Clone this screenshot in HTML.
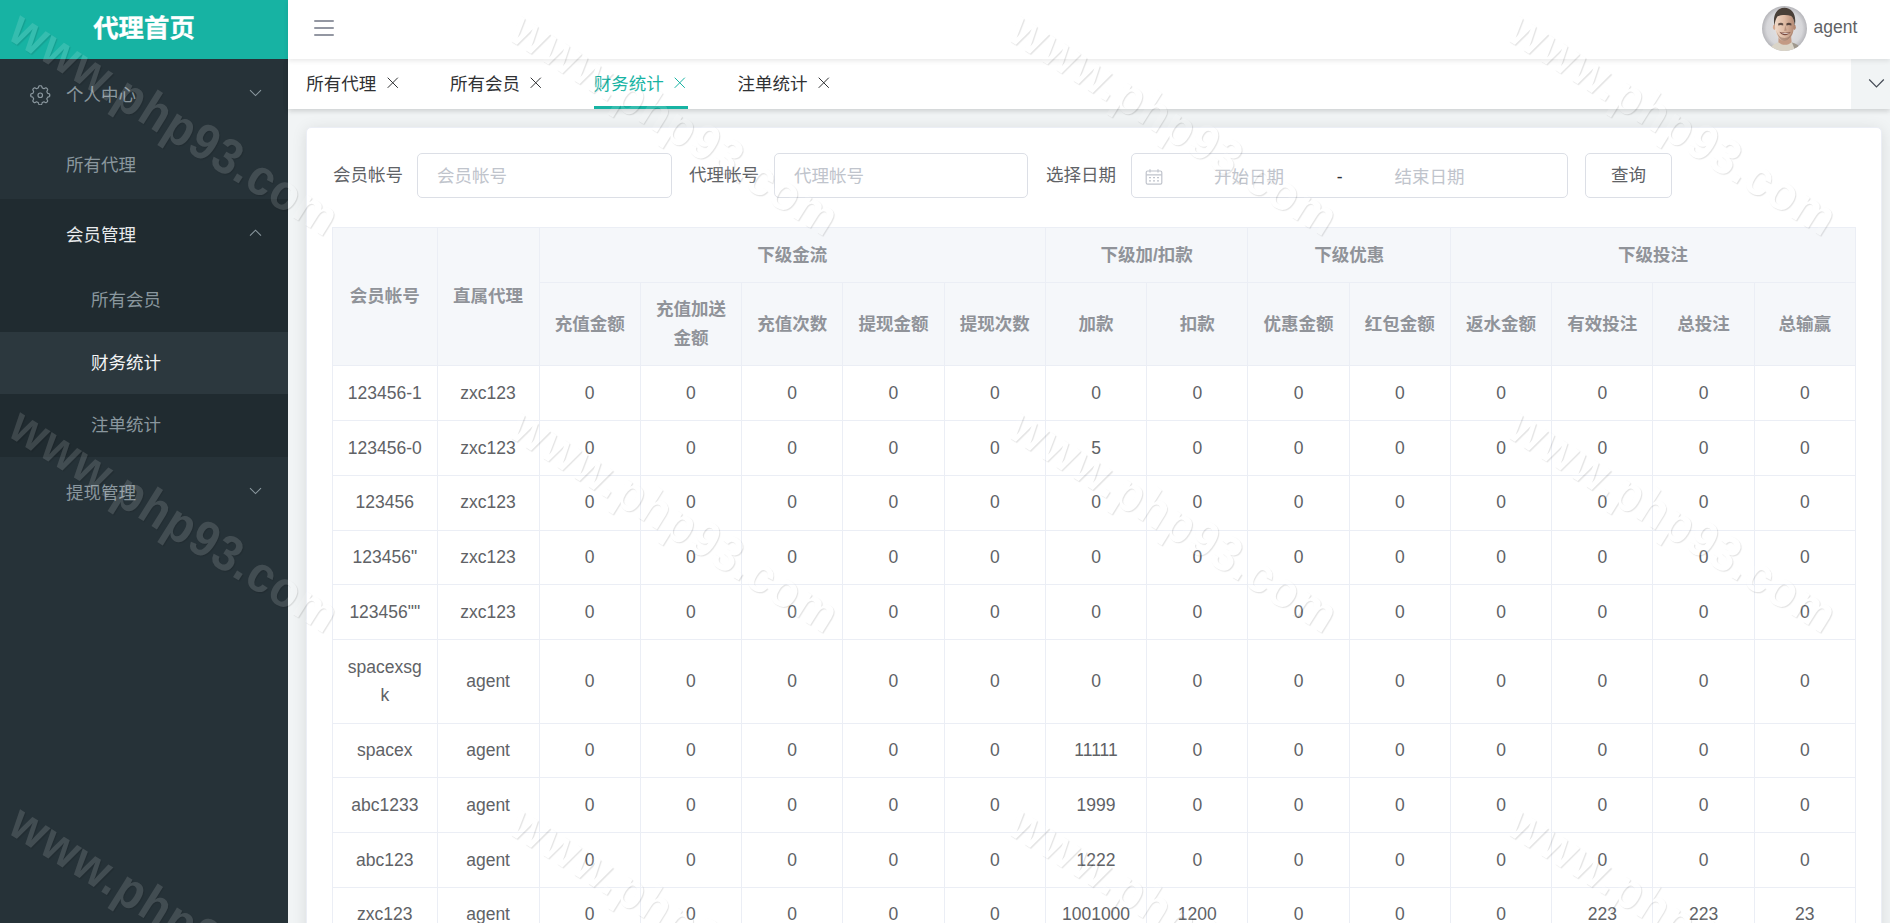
<!DOCTYPE html>
<html lang="zh-CN">
<head>
<meta charset="utf-8">
<title>代理首页</title>
<style>
*,*:before,*:after{box-sizing:border-box}
html,body{margin:0;padding:0}
body{width:1890px;height:923px;overflow:hidden;position:relative;background:#f1f4f5;
  font-family:"Liberation Sans","Noto Sans CJK SC",sans-serif;font-size:17.5px;color:#606266;}
/* ---------- sidebar ---------- */
.sidebar{position:absolute;left:0;top:0;width:288px;height:923px;background:#263238;overflow:hidden}
.brand{position:absolute;left:0;top:0;width:288px;height:59px;background:#17b3a3;color:#fff;
  font-size:25.4px;font-weight:bold;text-align:center;line-height:56px;-webkit-text-stroke:.3px #fff}
.menu{position:absolute;left:0;top:59px;width:288px}
.mi{position:relative;height:70px;line-height:72.4px;color:#8a979e;font-size:17.5px;padding-left:66px;white-space:nowrap}
.mi.on{color:#e8eaec}
.mi svg.gear{position:absolute;left:30.2px;top:25.5px;width:20.5px;height:20.5px}
.mi svg.arr{position:absolute;left:248px;top:28px;width:15px;height:12px}
.sub{background:#202b30}
.sub .mi{height:62.5px;line-height:63.5px;padding-left:91px}
.sub .mi.act{background:#2c383e;color:#f4f5f6}
/* ---------- navbar ---------- */
.navbar{position:absolute;left:288px;top:0;width:1602px;height:59px;background:#fff;z-index:5;
  box-shadow:0 2px 5px rgba(0,0,0,.09)}
.burger{position:absolute;left:26.4px;top:20.2px;width:19.6px;height:16px}
.burger i{position:absolute;left:0;width:100%;height:1.7px;background:#9397a2;border-radius:1px}
.avatar{position:absolute;left:1474px;top:6px;width:45px;height:45px;border-radius:50%;overflow:hidden}
.uname{position:absolute;left:1525.5px;top:0;line-height:55px;font-size:17.5px;color:#606266}
/* ---------- tabs ---------- */
.tabs{position:absolute;left:288px;top:59px;width:1602px;height:50px;background:#fff;z-index:4;
  box-shadow:0 2.5px 5px 0 rgba(0,0,0,.12),0 0 7.5px 0 rgba(0,0,0,.04);padding-left:18.3px;white-space:nowrap;font-size:0}
.tab{display:inline-block;position:relative;height:50px;line-height:50px;font-size:17.5px;color:#303133;padding:0 25px;vertical-align:top}
.tab:first-child{padding-left:0}
.tab svg{display:inline-block;width:17.5px;height:17.5px;margin-left:7.3px;margin-right:-1.05px;vertical-align:-1.6px}
.tab.on{color:#17b3a3}
.tab.on:after{content:"";position:absolute;left:25px;right:25px;bottom:0.5px;height:2.5px;background:#17b3a3}
.tools{position:absolute;right:0;top:0;width:39px;height:50px;background:#f1f4f5}
.tools svg{position:absolute;left:16.5px;top:19px;width:17px;height:11px}
/* ---------- card ---------- */
.card{position:absolute;left:306px;top:127px;width:1576px;height:900px;background:#fff;border:1px solid #ebeef5;border-radius:5px;
  box-shadow:0 2.5px 15px 0 rgba(0,0,0,.1)}
.content{position:absolute;left:0;top:0;width:1890px;height:923px;overflow:hidden}
.lab{position:absolute;top:153px;height:45px;line-height:44px;font-size:17.5px;color:#606266;white-space:nowrap}
.inp{position:absolute;top:153px;height:45px;border:1px solid #dcdfe6;border-radius:5px;background:#fff;
  font-size:17.5px;color:#c0c4cc;line-height:45px;padding-left:19px;white-space:nowrap}
.btn{position:absolute;top:153px;height:45px;border:1px solid #dcdfe6;border-radius:5px;background:#fff;
  font-size:17.5px;color:#606266;line-height:42.5px;text-align:center}
.rng span{position:absolute;top:0;text-align:center;line-height:46px}
/* ---------- table ---------- */
table{position:absolute;left:332px;top:227px;border-collapse:separate;border-spacing:0;table-layout:fixed;width:1523.85px;
  border-top:1px solid #ebeef5;border-left:1px solid #ebeef5;font-size:17.5px}
th,td{border-right:1px solid #ebeef5;border-bottom:1px solid #ebeef5;padding:12.5px 0;text-align:center;vertical-align:middle}
th{background:#f5f7fa;color:#909399;font-weight:bold}
td{color:#606266;background:#fff}
.cell{padding:0 12.5px;line-height:28.75px;word-break:break-all;overflow:hidden}
/* ---------- watermark ---------- */
.wm{position:absolute;z-index:50;font-family:"Liberation Sans",sans-serif;font-weight:bold;font-style:normal;font-size:46px;
  letter-spacing:1.2px;line-height:1;color:#fff;opacity:.13;text-shadow:1.4px .4px 1px rgba(0,0,0,.85);
  transform-origin:0 0;transform:rotate(32deg) translateY(-1.5px) scaleY(1.1);white-space:nowrap;pointer-events:none}
</style>
</head>
<body>

<div class="sidebar">
  <div class="brand">代理首页</div>
  <div class="menu">
    <div class="mi"><svg class="gear" viewBox="0 0 20 20"><path d="M19.30 10.00 L19.30 10.15 L19.29 10.29 L19.28 10.44 L19.26 10.58 L19.24 10.73 L19.20 10.87 L19.15 11.01 L19.08 11.15 L18.96 11.28 L18.80 11.39 L18.57 11.50 L18.29 11.58 L17.99 11.65 L17.71 11.72 L17.48 11.80 L17.31 11.88 L17.19 11.97 L17.10 12.06 L17.03 12.16 L16.97 12.27 L16.92 12.37 L16.88 12.48 L16.83 12.58 L16.79 12.69 L16.74 12.79 L16.70 12.90 L16.66 13.01 L16.61 13.11 L16.57 13.22 L16.53 13.33 L16.50 13.44 L16.48 13.56 L16.47 13.69 L16.50 13.84 L16.56 14.02 L16.67 14.23 L16.82 14.48 L16.98 14.74 L17.12 15.00 L17.21 15.23 L17.24 15.43 L17.23 15.61 L17.19 15.76 L17.12 15.89 L17.05 16.02 L16.96 16.14 L16.87 16.25 L16.78 16.36 L16.68 16.47 L16.58 16.58 L16.47 16.68 L16.36 16.78 L16.25 16.87 L16.14 16.96 L16.02 17.05 L15.89 17.12 L15.76 17.19 L15.61 17.23 L15.43 17.24 L15.23 17.21 L15.00 17.12 L14.74 16.98 L14.48 16.82 L14.23 16.67 L14.02 16.56 L13.84 16.50 L13.69 16.47 L13.56 16.48 L13.44 16.50 L13.33 16.53 L13.22 16.57 L13.11 16.61 L13.01 16.66 L12.90 16.70 L12.79 16.74 L12.69 16.79 L12.58 16.83 L12.48 16.88 L12.37 16.92 L12.27 16.97 L12.16 17.03 L12.06 17.10 L11.97 17.19 L11.88 17.31 L11.80 17.48 L11.72 17.71 L11.65 17.99 L11.58 18.29 L11.50 18.57 L11.39 18.80 L11.28 18.96 L11.15 19.08 L11.01 19.15 L10.87 19.20 L10.73 19.24 L10.58 19.26 L10.44 19.28 L10.29 19.29 L10.15 19.30 L10.00 19.30 L9.85 19.30 L9.71 19.29 L9.56 19.28 L9.42 19.26 L9.27 19.24 L9.13 19.20 L8.99 19.15 L8.85 19.08 L8.72 18.96 L8.61 18.80 L8.50 18.57 L8.42 18.29 L8.35 17.99 L8.28 17.71 L8.20 17.48 L8.12 17.31 L8.03 17.19 L7.94 17.10 L7.84 17.03 L7.73 16.97 L7.63 16.92 L7.52 16.88 L7.42 16.83 L7.31 16.79 L7.21 16.74 L7.10 16.70 L6.99 16.66 L6.89 16.61 L6.78 16.57 L6.67 16.53 L6.56 16.50 L6.44 16.48 L6.31 16.47 L6.16 16.50 L5.98 16.56 L5.77 16.67 L5.52 16.82 L5.26 16.98 L5.00 17.12 L4.77 17.21 L4.57 17.24 L4.39 17.23 L4.24 17.19 L4.11 17.12 L3.98 17.05 L3.86 16.96 L3.75 16.87 L3.64 16.78 L3.53 16.68 L3.42 16.58 L3.32 16.47 L3.22 16.36 L3.13 16.25 L3.04 16.14 L2.95 16.02 L2.88 15.89 L2.81 15.76 L2.77 15.61 L2.76 15.43 L2.79 15.23 L2.88 15.00 L3.02 14.74 L3.18 14.48 L3.33 14.23 L3.44 14.02 L3.50 13.84 L3.53 13.69 L3.52 13.56 L3.50 13.44 L3.47 13.33 L3.43 13.22 L3.39 13.11 L3.34 13.01 L3.30 12.90 L3.26 12.79 L3.21 12.69 L3.17 12.58 L3.12 12.48 L3.08 12.37 L3.03 12.27 L2.97 12.16 L2.90 12.06 L2.81 11.97 L2.69 11.88 L2.52 11.80 L2.29 11.72 L2.01 11.65 L1.71 11.58 L1.43 11.50 L1.20 11.39 L1.04 11.28 L0.92 11.15 L0.85 11.01 L0.80 10.87 L0.76 10.73 L0.74 10.58 L0.72 10.44 L0.71 10.29 L0.70 10.15 L0.70 10.00 L0.70 9.85 L0.71 9.71 L0.72 9.56 L0.74 9.42 L0.76 9.27 L0.80 9.13 L0.85 8.99 L0.92 8.85 L1.04 8.72 L1.20 8.61 L1.43 8.50 L1.71 8.42 L2.01 8.35 L2.29 8.28 L2.52 8.20 L2.69 8.12 L2.81 8.03 L2.90 7.94 L2.97 7.84 L3.03 7.73 L3.08 7.63 L3.12 7.52 L3.17 7.42 L3.21 7.31 L3.26 7.21 L3.30 7.10 L3.34 6.99 L3.39 6.89 L3.43 6.78 L3.47 6.67 L3.50 6.56 L3.52 6.44 L3.53 6.31 L3.50 6.16 L3.44 5.98 L3.33 5.77 L3.18 5.52 L3.02 5.26 L2.88 5.00 L2.79 4.77 L2.76 4.57 L2.77 4.39 L2.81 4.24 L2.88 4.11 L2.95 3.98 L3.04 3.86 L3.13 3.75 L3.22 3.64 L3.32 3.53 L3.42 3.42 L3.53 3.32 L3.64 3.22 L3.75 3.13 L3.86 3.04 L3.98 2.95 L4.11 2.88 L4.24 2.81 L4.39 2.77 L4.57 2.76 L4.77 2.79 L5.00 2.88 L5.26 3.02 L5.52 3.18 L5.77 3.33 L5.98 3.44 L6.16 3.50 L6.31 3.53 L6.44 3.52 L6.56 3.50 L6.67 3.47 L6.78 3.43 L6.89 3.39 L6.99 3.34 L7.10 3.30 L7.21 3.26 L7.31 3.21 L7.42 3.17 L7.52 3.12 L7.63 3.08 L7.73 3.03 L7.84 2.97 L7.94 2.90 L8.03 2.81 L8.12 2.69 L8.20 2.52 L8.28 2.29 L8.35 2.01 L8.42 1.71 L8.50 1.43 L8.61 1.20 L8.72 1.04 L8.85 0.92 L8.99 0.85 L9.13 0.80 L9.27 0.76 L9.42 0.74 L9.56 0.72 L9.71 0.71 L9.85 0.70 L10.00 0.70 L10.15 0.70 L10.29 0.71 L10.44 0.72 L10.58 0.74 L10.73 0.76 L10.87 0.80 L11.01 0.85 L11.15 0.92 L11.28 1.04 L11.39 1.20 L11.50 1.43 L11.58 1.71 L11.65 2.01 L11.72 2.29 L11.80 2.52 L11.88 2.69 L11.97 2.81 L12.06 2.90 L12.16 2.97 L12.27 3.03 L12.37 3.08 L12.48 3.12 L12.58 3.17 L12.69 3.21 L12.79 3.26 L12.90 3.30 L13.01 3.34 L13.11 3.39 L13.22 3.43 L13.33 3.47 L13.44 3.50 L13.56 3.52 L13.69 3.53 L13.84 3.50 L14.02 3.44 L14.23 3.33 L14.48 3.18 L14.74 3.02 L15.00 2.88 L15.23 2.79 L15.43 2.76 L15.61 2.77 L15.76 2.81 L15.89 2.88 L16.02 2.95 L16.14 3.04 L16.25 3.13 L16.36 3.22 L16.47 3.32 L16.58 3.42 L16.68 3.53 L16.78 3.64 L16.87 3.75 L16.96 3.86 L17.05 3.98 L17.12 4.11 L17.19 4.24 L17.23 4.39 L17.24 4.57 L17.21 4.77 L17.12 5.00 L16.98 5.26 L16.82 5.52 L16.67 5.77 L16.56 5.98 L16.50 6.16 L16.47 6.31 L16.48 6.44 L16.50 6.56 L16.53 6.67 L16.57 6.78 L16.61 6.89 L16.66 6.99 L16.70 7.10 L16.74 7.21 L16.79 7.31 L16.83 7.42 L16.88 7.52 L16.92 7.63 L16.97 7.73 L17.03 7.84 L17.10 7.94 L17.19 8.03 L17.31 8.12 L17.48 8.20 L17.71 8.28 L17.99 8.35 L18.29 8.42 L18.57 8.50 L18.80 8.61 L18.96 8.72 L19.08 8.85 L19.15 8.99 L19.20 9.13 L19.24 9.27 L19.26 9.42 L19.28 9.56 L19.29 9.71 L19.30 9.85Z" fill="none" stroke="#8a979e" stroke-width="1.15" stroke-linejoin="round"/><circle cx="10" cy="10" r="2.2" fill="none" stroke="#8a979e" stroke-width="1.15"/></svg>个人中心<svg class="arr" viewBox="0 0 15 12"><path d="M2 3.2 L7.5 8.6 L13 3.2" fill="none" stroke="#8a979e" stroke-width="1.1"/></svg></div>
    <div class="mi">所有代理</div>
    <div class="mi on" style="background:#202b30">会员管理<svg class="arr" viewBox="0 0 15 12"><path d="M2 8.6 L7.5 3.2 L13 8.6" fill="none" stroke="#8a979e" stroke-width="1.1"/></svg></div>
    <div class="sub">
      <div class="mi">所有会员</div>
      <div class="mi act">财务统计</div>
      <div class="mi">注单统计</div>
    </div>
    <div class="mi">提现管理<svg class="arr" viewBox="0 0 15 12"><path d="M2 3.2 L7.5 8.6 L13 3.2" fill="none" stroke="#8a979e" stroke-width="1.1"/></svg></div>
  </div>
</div>

<div class="navbar">
  <div class="burger"><i style="top:0"></i><i style="top:7px"></i><i style="top:14px"></i></div>
  <div class="avatar">
    <svg viewBox="0 0 45 45" width="45" height="45">
      <defs>
        <radialGradient id="abg" cx="50%" cy="50%" r="55%"><stop offset="0" stop-color="#e7e7e9"/><stop offset=".72" stop-color="#d6d6d9"/><stop offset="1" stop-color="#a6a6ab"/></radialGradient>
        <linearGradient id="skin" x1="0" x2="1" y1="0" y2="0"><stop offset="0" stop-color="#f0d9c8"/><stop offset=".5" stop-color="#dfbba4"/><stop offset="1" stop-color="#b48a74"/></linearGradient>
        <filter id="abl" x="-10%" y="-10%" width="120%" height="120%"><feGaussianBlur stdDeviation=".45"/></filter>
      </defs>
      <rect width="45" height="45" fill="url(#abg)"/>
      <g filter="url(#abl)">
        <path d="M7 45.5 C8 40 13 37.3 17 36 L29 36 C33 37.2 38 39.4 39.5 45.5 Z" fill="#dad4c7"/>
        <path d="M30 36.4 C34 37.4 38 39.2 39.5 45.5 L33.5 45.5 Z" fill="#8b8479" opacity=".75"/>
        <path d="M16.6 29 L29 29 L29.6 36.2 C26 39.6 20 39.6 16.4 36.2 Z" fill="#c39a84"/>
        <ellipse cx="12.4" cy="21.2" rx="1.5" ry="2.7" fill="#d4a991"/>
        <ellipse cx="32.3" cy="21.2" rx="1.5" ry="2.7" fill="#b18670"/>
        <path d="M13 17 C13 9.5 17 7.5 22.5 7.5 C28 7.5 32 9.5 32 17 C32 24 31 28 28.6 31.4 C26.6 34.2 24.5 34.9 22.5 34.9 C20.5 34.9 18.4 34.2 16.4 31.4 C14 28 13 24 13 17 Z" fill="url(#skin)"/>
        <path d="M14.4 24.5 C15.4 30.8 19 34.9 22.5 34.9 C26 34.9 29.8 30.8 30.8 24.5 C29.6 29.3 26.6 32 22.5 32 C18.4 32 15.8 29.3 14.4 24.5 Z" fill="#86685a" opacity=".5"/>
        <path d="M12.5 19.8 C10.3 9 15 1.8 22.5 1.8 C30 1.8 35 9 32.7 19.8 C32.4 15 31.2 11.6 29.2 9.9 C25 8.7 19 8.9 15.6 10.3 C14 12.2 13 15.2 12.5 19.8 Z" fill="#4a3f39"/>
        <path d="M16.2 17.6 Q18.8 16.2 21.2 17.5 L21.2 19.6 Q18.8 18.6 16.2 19.6 Z" fill="#4b3a33" opacity=".85"/>
        <path d="M24.4 17.5 Q26.8 16.2 29.4 17.6 L29.4 19.6 Q26.8 18.6 24.4 19.6 Z" fill="#43332d" opacity=".85"/>
        <path d="M23.2 19.5 L24.8 24.6 L22.2 25 Z" fill="#a47c69" opacity=".6"/>
        <path d="M17.4 25.8 C19.8 30.3 26 30.3 28.9 25.8 C26 27 20.4 27 17.4 25.8 Z" fill="#7a4b41"/>
        <path d="M19.2 26.7 C21.6 28.4 25.6 28.4 27.6 26.7 C25.4 27.4 21.6 27.4 19.2 26.7 Z" fill="#f7f1ec"/>
      </g>
    </svg>
  </div>
  <div class="uname">agent</div>
</div>

<div class="tabs">
  <div class="tab">所有代理<svg viewBox="0 0 14 14"><path d="M2.95 2.95 L11.05 11.05 M11.05 2.95 L2.95 11.05" stroke="#303133" stroke-width=".8" fill="none"/></svg></div><div class="tab">所有会员<svg viewBox="0 0 14 14"><path d="M2.95 2.95 L11.05 11.05 M11.05 2.95 L2.95 11.05" stroke="#303133" stroke-width=".8" fill="none"/></svg></div><div class="tab on">财务统计<svg viewBox="0 0 14 14"><path d="M2.95 2.95 L11.05 11.05 M11.05 2.95 L2.95 11.05" stroke="#17b3a3" stroke-width=".8" fill="none"/></svg></div><div class="tab">注单统计<svg viewBox="0 0 14 14"><path d="M2.95 2.95 L11.05 11.05 M11.05 2.95 L2.95 11.05" stroke="#303133" stroke-width=".8" fill="none"/></svg></div>
  <div class="tools"><svg viewBox="0 0 17 11"><path d="M1.2 1.5 L8.5 8.8 L15.8 1.5" fill="none" stroke="#454b55" stroke-width="1.2"/></svg></div>
</div>

<div class="card"></div>
<div class="content">
  <div class="lab" style="left:333px">会员帐号</div>
  <div class="inp" style="left:417px;width:255px">会员帐号</div>
  <div class="lab" style="left:689px">代理帐号</div>
  <div class="inp" style="left:774px;width:254px">代理帐号</div>
  <div class="lab" style="left:1046px">选择日期</div>
  <div class="inp rng" style="left:1131px;width:437px;padding:0">
    <svg style="position:absolute;left:12.6px;top:13.6px" width="18" height="18" viewBox="0 0 18 18"><rect x="1.2" y="3" width="15.6" height="13.2" rx="1.4" fill="none" stroke="#c0c4cc" stroke-width="1.2"/><path d="M1.2 6.8 H16.8 M5 1.2 V4.4 M13 1.2 V4.4" stroke="#c0c4cc" stroke-width="1.2" fill="none"/><path d="M4 9.6 H6 M8 9.6 H10 M12 9.6 H14 M4 12.8 H6 M8 12.8 H10 M12 12.8 H14" stroke="#c0c4cc" stroke-width="1.3" fill="none"/></svg>
    <span style="left:37px;width:160px">开始日期</span>
    <span style="left:197.5px;width:20.5px;color:#303133">-</span>
    <span style="left:217.5px;width:160px">结束日期</span>
  </div>
  <div class="btn" style="left:1585px;width:87px">查询</div>

  <table>
    <colgroup><col style="width:104.6px"><col style="width:102px"><col style="width:101.25px"><col style="width:101.25px"><col style="width:101.25px"><col style="width:101.25px"><col style="width:101.25px"><col style="width:101.25px"><col style="width:101.25px"><col style="width:101.25px"><col style="width:101.25px"><col style="width:101.25px"><col style="width:101.25px"><col style="width:101.25px"><col style="width:101.25px"></colgroup>
    <thead>
<tr><th rowspan="2"><div class="cell">会员帐号</div></th><th rowspan="2"><div class="cell">直属代理</div></th><th colspan="5"><div class="cell">下级金流</div></th><th colspan="2"><div class="cell">下级加/扣款</div></th><th colspan="2"><div class="cell">下级优惠</div></th><th colspan="4"><div class="cell">下级投注</div></th></tr>
<tr><th><div class="cell">充值金额</div></th><th><div class="cell">充值加送金额</div></th><th><div class="cell">充值次数</div></th><th><div class="cell">提现金额</div></th><th><div class="cell">提现次数</div></th><th><div class="cell">加款</div></th><th><div class="cell">扣款</div></th><th><div class="cell">优惠金额</div></th><th><div class="cell">红包金额</div></th><th><div class="cell">返水金额</div></th><th><div class="cell">有效投注</div></th><th><div class="cell">总投注</div></th><th><div class="cell">总输赢</div></th></tr>

    </thead>
    <tbody>
<tr><td><div class="cell">123456-1</div></td><td><div class="cell">zxc123</div></td><td><div class="cell">0</div></td><td><div class="cell">0</div></td><td><div class="cell">0</div></td><td><div class="cell">0</div></td><td><div class="cell">0</div></td><td><div class="cell">0</div></td><td><div class="cell">0</div></td><td><div class="cell">0</div></td><td><div class="cell">0</div></td><td><div class="cell">0</div></td><td><div class="cell">0</div></td><td><div class="cell">0</div></td><td><div class="cell">0</div></td></tr>
<tr><td><div class="cell">123456-0</div></td><td><div class="cell">zxc123</div></td><td><div class="cell">0</div></td><td><div class="cell">0</div></td><td><div class="cell">0</div></td><td><div class="cell">0</div></td><td><div class="cell">0</div></td><td><div class="cell">5</div></td><td><div class="cell">0</div></td><td><div class="cell">0</div></td><td><div class="cell">0</div></td><td><div class="cell">0</div></td><td><div class="cell">0</div></td><td><div class="cell">0</div></td><td><div class="cell">0</div></td></tr>
<tr><td><div class="cell">123456</div></td><td><div class="cell">zxc123</div></td><td><div class="cell">0</div></td><td><div class="cell">0</div></td><td><div class="cell">0</div></td><td><div class="cell">0</div></td><td><div class="cell">0</div></td><td><div class="cell">0</div></td><td><div class="cell">0</div></td><td><div class="cell">0</div></td><td><div class="cell">0</div></td><td><div class="cell">0</div></td><td><div class="cell">0</div></td><td><div class="cell">0</div></td><td><div class="cell">0</div></td></tr>
<tr><td><div class="cell">123456&quot;</div></td><td><div class="cell">zxc123</div></td><td><div class="cell">0</div></td><td><div class="cell">0</div></td><td><div class="cell">0</div></td><td><div class="cell">0</div></td><td><div class="cell">0</div></td><td><div class="cell">0</div></td><td><div class="cell">0</div></td><td><div class="cell">0</div></td><td><div class="cell">0</div></td><td><div class="cell">0</div></td><td><div class="cell">0</div></td><td><div class="cell">0</div></td><td><div class="cell">0</div></td></tr>
<tr><td><div class="cell">123456&quot;&quot;</div></td><td><div class="cell">zxc123</div></td><td><div class="cell">0</div></td><td><div class="cell">0</div></td><td><div class="cell">0</div></td><td><div class="cell">0</div></td><td><div class="cell">0</div></td><td><div class="cell">0</div></td><td><div class="cell">0</div></td><td><div class="cell">0</div></td><td><div class="cell">0</div></td><td><div class="cell">0</div></td><td><div class="cell">0</div></td><td><div class="cell">0</div></td><td><div class="cell">0</div></td></tr>
<tr><td><div class="cell">spacexsgk</div></td><td><div class="cell">agent</div></td><td><div class="cell">0</div></td><td><div class="cell">0</div></td><td><div class="cell">0</div></td><td><div class="cell">0</div></td><td><div class="cell">0</div></td><td><div class="cell">0</div></td><td><div class="cell">0</div></td><td><div class="cell">0</div></td><td><div class="cell">0</div></td><td><div class="cell">0</div></td><td><div class="cell">0</div></td><td><div class="cell">0</div></td><td><div class="cell">0</div></td></tr>
<tr><td><div class="cell">spacex</div></td><td><div class="cell">agent</div></td><td><div class="cell">0</div></td><td><div class="cell">0</div></td><td><div class="cell">0</div></td><td><div class="cell">0</div></td><td><div class="cell">0</div></td><td><div class="cell">11111</div></td><td><div class="cell">0</div></td><td><div class="cell">0</div></td><td><div class="cell">0</div></td><td><div class="cell">0</div></td><td><div class="cell">0</div></td><td><div class="cell">0</div></td><td><div class="cell">0</div></td></tr>
<tr><td><div class="cell">abc1233</div></td><td><div class="cell">agent</div></td><td><div class="cell">0</div></td><td><div class="cell">0</div></td><td><div class="cell">0</div></td><td><div class="cell">0</div></td><td><div class="cell">0</div></td><td><div class="cell">1999</div></td><td><div class="cell">0</div></td><td><div class="cell">0</div></td><td><div class="cell">0</div></td><td><div class="cell">0</div></td><td><div class="cell">0</div></td><td><div class="cell">0</div></td><td><div class="cell">0</div></td></tr>
<tr><td><div class="cell">abc123</div></td><td><div class="cell">agent</div></td><td><div class="cell">0</div></td><td><div class="cell">0</div></td><td><div class="cell">0</div></td><td><div class="cell">0</div></td><td><div class="cell">0</div></td><td><div class="cell">1222</div></td><td><div class="cell">0</div></td><td><div class="cell">0</div></td><td><div class="cell">0</div></td><td><div class="cell">0</div></td><td><div class="cell">0</div></td><td><div class="cell">0</div></td><td><div class="cell">0</div></td></tr>
<tr><td><div class="cell">zxc123</div></td><td><div class="cell">agent</div></td><td><div class="cell">0</div></td><td><div class="cell">0</div></td><td><div class="cell">0</div></td><td><div class="cell">0</div></td><td><div class="cell">0</div></td><td><div class="cell">1001000</div></td><td><div class="cell">1200</div></td><td><div class="cell">0</div></td><td><div class="cell">0</div></td><td><div class="cell">0</div></td><td><div class="cell">223</div></td><td><div class="cell">223</div></td><td><div class="cell">23</div></td></tr>

    </tbody>
  </table>
</div>

<div class="wm" style="left:28.3px;top:3.3px">www.php93.com</div>
<div class="wm" style="left:527.6px;top:3.3px">www.php93.com</div>
<div class="wm" style="left:1026.9px;top:3.3px">www.php93.com</div>
<div class="wm" style="left:1526.2px;top:3.3px">www.php93.com</div>
<div class="wm" style="left:28.3px;top:400.1px">www.php93.com</div>
<div class="wm" style="left:527.6px;top:400.1px">www.php93.com</div>
<div class="wm" style="left:1026.9px;top:400.1px">www.php93.com</div>
<div class="wm" style="left:1526.2px;top:400.1px">www.php93.com</div>
<div class="wm" style="left:28.3px;top:796.9px">www.php93.com</div>
<div class="wm" style="left:527.6px;top:796.9px">www.php93.com</div>
<div class="wm" style="left:1026.9px;top:796.9px">www.php93.com</div>
<div class="wm" style="left:1526.2px;top:796.9px">www.php93.com</div>

</body>
</html>
